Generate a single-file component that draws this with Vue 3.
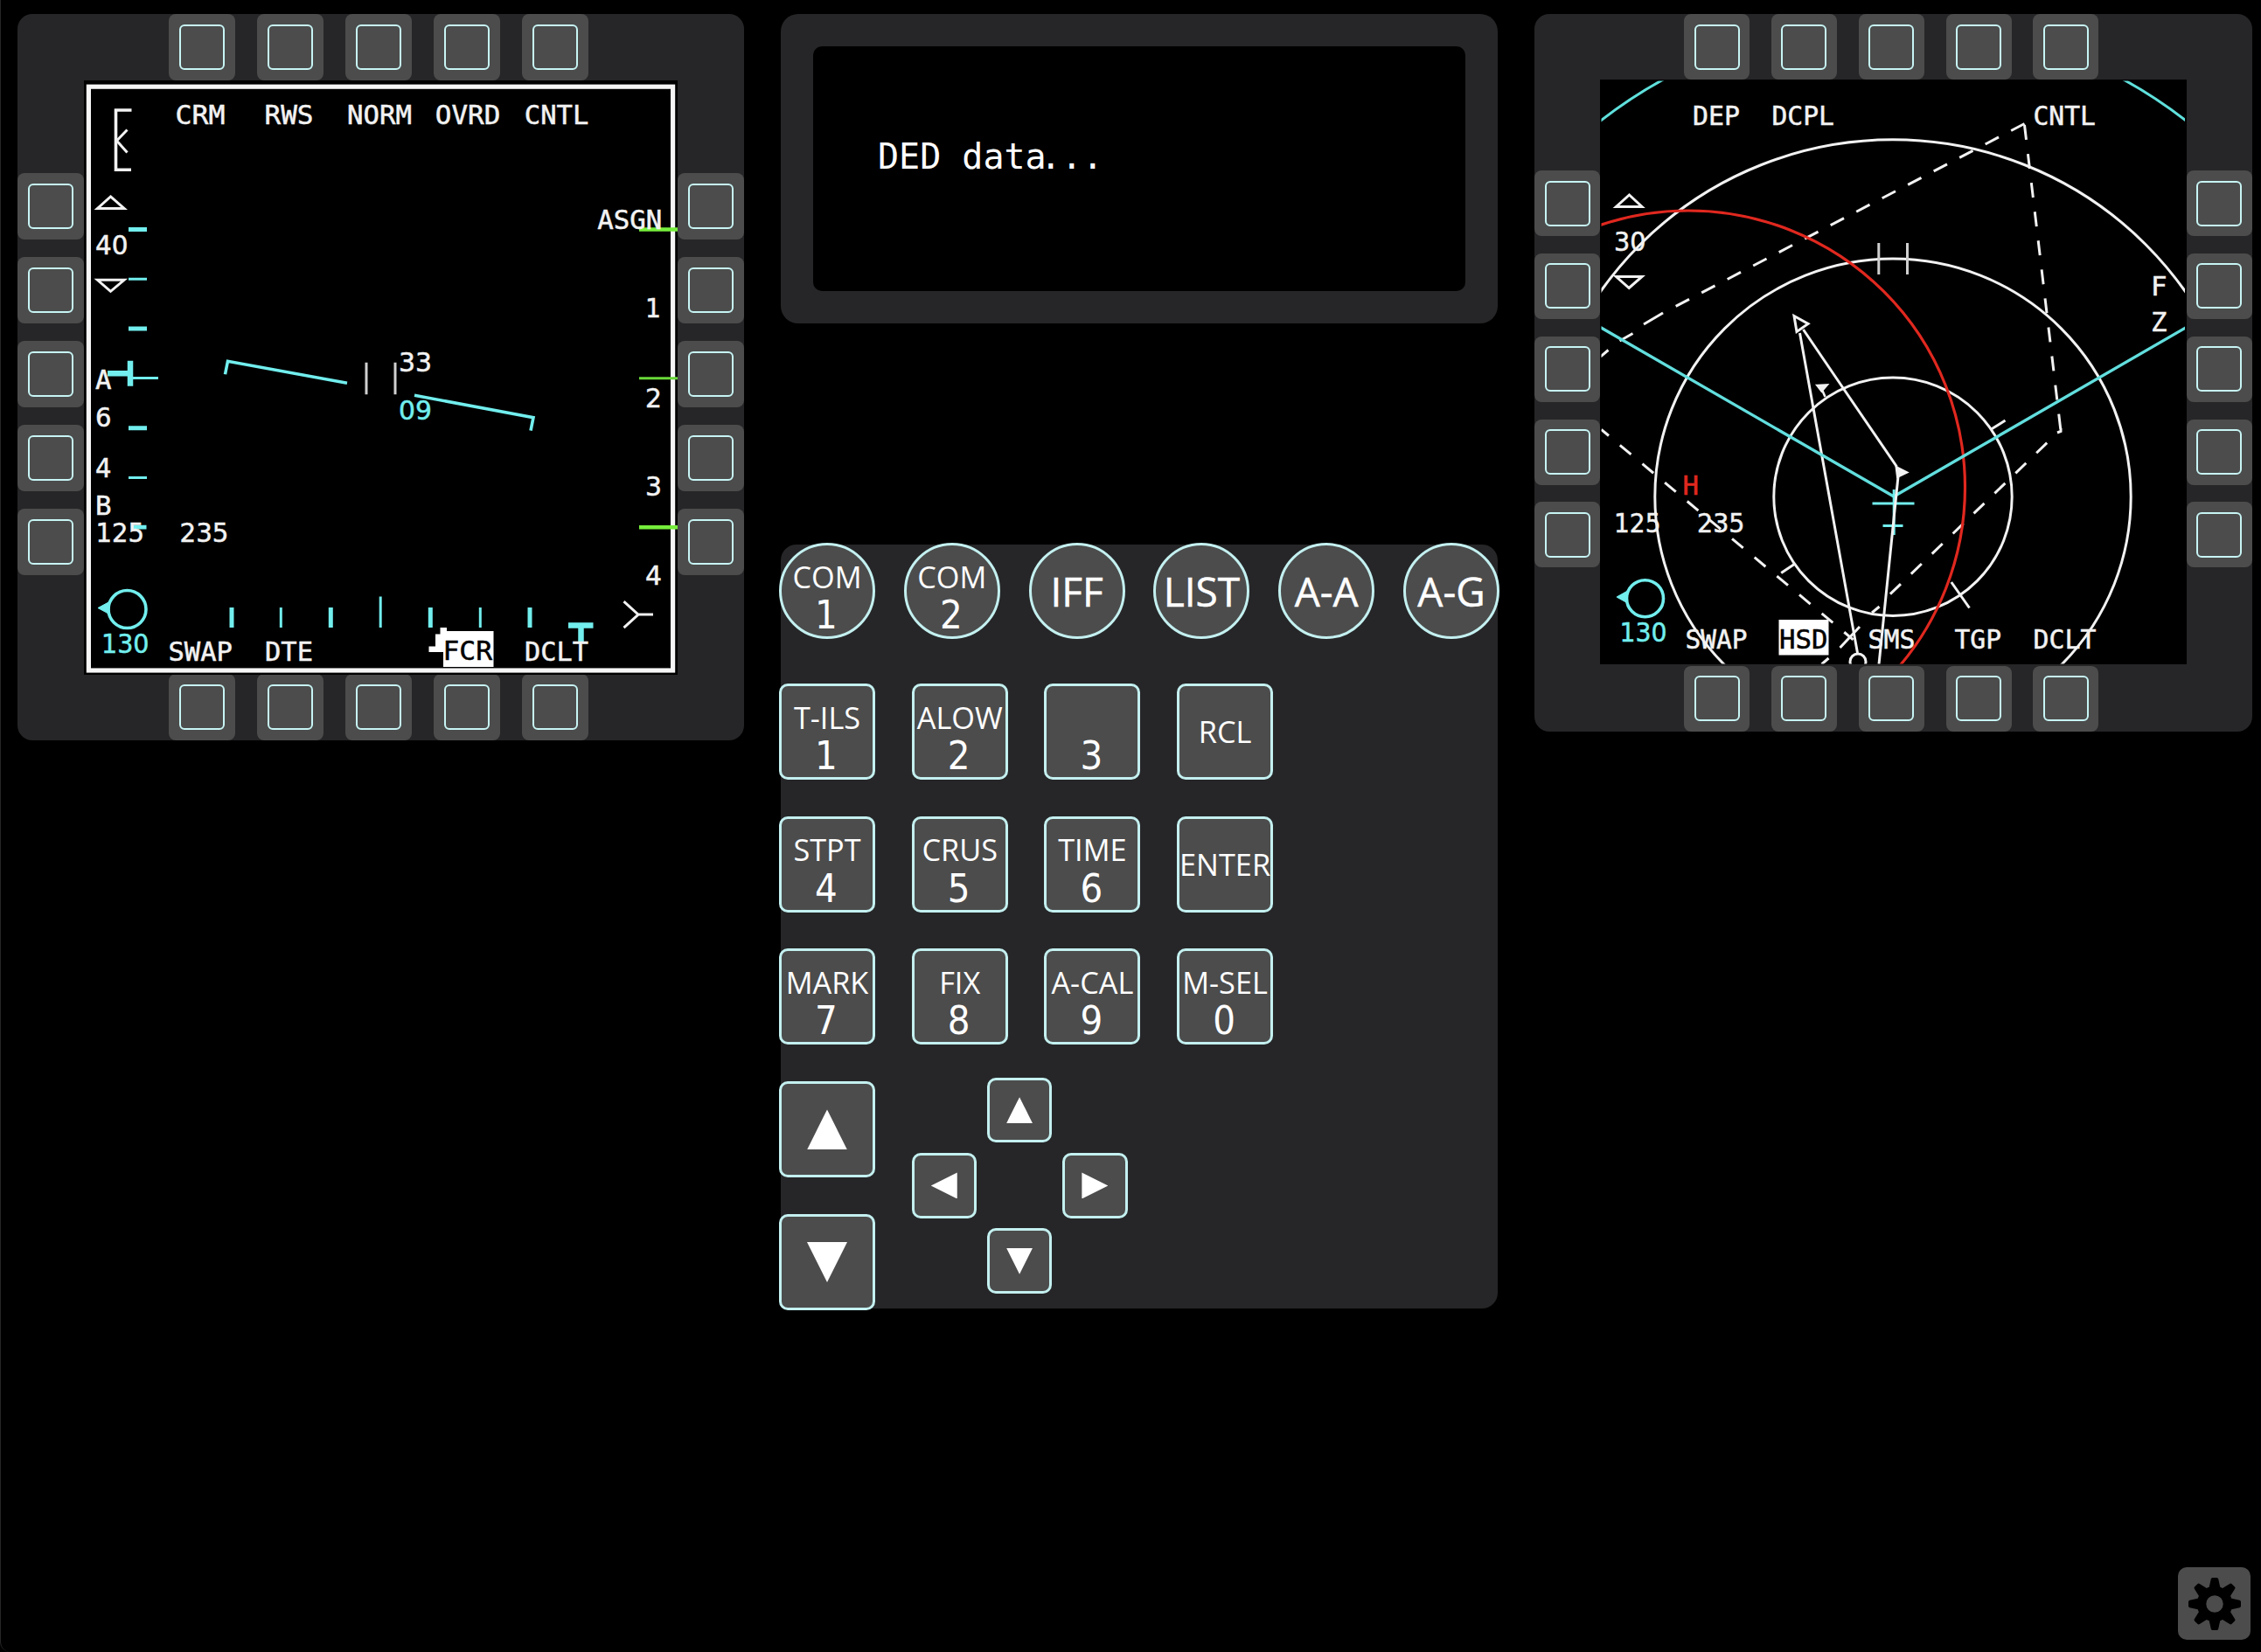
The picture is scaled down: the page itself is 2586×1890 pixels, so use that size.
<script setup>
const WHITE = '#f2f2f2'
const CYAN = '#72eeee'
const RED = '#e0281f'

// s: string, x: left ink edge, w: ink width, y: baseline
const fcrLabels = [
  { s: 'CRM', x: 202, w: 54, y: 142.5 },
  { s: 'RWS', x: 304, w: 53, y: 142.5 },
  { s: 'NORM', x: 398.5, w: 71, y: 142.5 },
  { s: 'OVRD', x: 499.3, w: 71.5, y: 142.5 },
  { s: 'CNTL', x: 601.3, w: 70.5, y: 142.5 },
  { s: 'ASGN', x: 684.7, w: 71, y: 262.5 },
  { s: '1', x: 739.5, w: 15, y: 363 },
  { s: '2', x: 739.5, w: 16, y: 466.5 },
  { s: '3', x: 739.5, w: 16, y: 567.5 },
  { s: '4', x: 739.5, w: 16, y: 669.5 },
  { s: '33', x: 457.5, w: 35, y: 425.5 },
  { s: '09', x: 457.5, w: 35, y: 480, c: CYAN },
  { s: '40', x: 110.5, w: 34.5, y: 291 },
  { s: 'A', x: 110.5, w: 15.5, y: 445 },
  { s: '6', x: 110.5, w: 15.5, y: 488 },
  { s: '4', x: 110.5, w: 15.5, y: 546.5 },
  { s: 'B', x: 110.5, w: 15.5, y: 589 },
  { s: '125', x: 111, w: 52.5, y: 620.5 },
  { s: '235', x: 207, w: 53, y: 620.5 },
  { s: '130', x: 117.5, w: 51.5, y: 747, c: CYAN },
  { s: 'SWAP', x: 194, w: 70.5, y: 756 },
  { s: 'DTE', x: 304.5, w: 52, y: 756 },
  { s: 'FCR', x: 508, w: 53.5, y: 755.5, c: '#000' },
  { s: 'DCLT', x: 601.5, w: 70, y: 756 },
]
const hsdLabels = [
  { s: 'DEP', x: 1938, w: 51, y: 142.5 },
  { s: 'DCPL', x: 2028.5, w: 68.5, y: 142.5 },
  { s: 'CNTL', x: 2327.5, w: 68.5, y: 142.5 },
  { s: 'F', x: 2462, w: 15.5, y: 338 },
  { s: 'Z', x: 2462, w: 15.5, y: 379 },
  { s: '30', x: 1848, w: 33.5, y: 286.5 },
  { s: 'H', x: 1926.5, w: 15.5, y: 566, c: RED },
  { s: '125', x: 1848, w: 50.5, y: 609 },
  { s: '235', x: 1943, w: 51.5, y: 609 },
  { s: '130', x: 1854.5, w: 51, y: 733.5, c: CYAN },
  { s: 'SWAP', x: 1929.5, w: 68, y: 742 },
  { s: 'HSD', x: 2037, w: 52.5, y: 742, c: '#000' },
  { s: 'SMS', x: 2138.5, w: 51, y: 742 },
  { s: 'TGP', x: 2237.5, w: 50.5, y: 742 },
  { s: 'DCLT', x: 2327.5, w: 69, y: 742 },
]
const isNumber = (s) => /^\d+$/.test(s)

const modeKeys = [
  { top: 'COM', main: '1' },
  { top: 'COM', main: '2' },
  { main: 'IFF' },
  { main: 'LIST' },
  { main: 'A-A' },
  { main: 'A-G' },
]
const keys = [
  { top: 'T-ILS', main: '1' },
  { top: 'ALOW', main: '2' },
  { top: '', main: '3' },
  { top: 'RCL' },
  { top: 'STPT', main: '4' },
  { top: 'CRUS', main: '5' },
  { top: 'TIME', main: '6' },
  { top: 'ENTER' },
  { top: 'MARK', main: '7' },
  { top: 'FIX', main: '8' },
  { top: 'A-CAL', main: '9' },
  { top: 'M-SEL', main: '0' },
]
const sides = ['top', 'left', 'right', 'bottom']
const teeth = [0, 45, 90, 135, 180, 225, 270, 315]
</script>

<template>
  <div class="cockpit">
    <main class="row">
      <section class="mfd mfd-left">
        <div v-for="side in sides" :key="side" class="osbs" :class="side">
          <button v-for="n in 5" :key="n" class="osb"><span class="cap"></span></button>
        </div>
        <svg class="screen" viewBox="96 92 679 680" preserveAspectRatio="none">
          <g fill="none" :stroke="WHITE" stroke-width="3">
            <rect x="101.4" y="99.2" width="668.2" height="668.3" stroke="#f6f6f6" stroke-width="5.2" />
            <path d="M132.500 124.500V196M131 126H150.500M131 194.300H150" stroke-width="3.600" />
            <path d="M145.500 148.500L133.500 161L145.500 174.500" />
            <path d="M126.500 225L142 238.500H111.500Z" />
            <path d="M111.500 320.500H142L126.500 333.500Z" />
            <path d="M419 415V451.500M452 415V451.500" stroke="#d0d0d0" />
            <path d="M713.500 688.500L730 703.500H747M730 703.500L713.500 718.500" />
          </g>
          <g fill="none" :stroke="CYAN" stroke-width="3">
            <path d="M147 319.300H168M147 546.800H168M152 432.800H181M321.300 695.500V718.500M549.300 695.500V718.500M435.200 683V718.500" />
            <path d="M147 262.700H168M147 376.300H168M147 490H168M150 603.500H167.500M265 695.500V718.500M378.300 695.500V718.500M492.300 695.500V718.500M606 695.500V718.500" stroke-width="5" />
            <path d="M149 413V442M123 427.500H149M650 716H678.500M664.500 716V736" stroke-width="6.500" />
            <path d="M257.500 428.500L260.500 413.500L397 438.500M474 452.500L610 478L607 493" stroke-width="3.600" />
            <circle cx="145.500" cy="697.500" r="21.500" stroke-width="3.600" />
            <path d="M112 696L125 689V703Z" :fill="CYAN" stroke-width="1" />
          </g>
          <path d="M731 262.700H775M731 603.700H775" stroke="#76ee3c" stroke-width="4.600" />
          <path d="M731 433H775" stroke="#68d838" stroke-width="3" />
          <path d="M503.500 718.500H511V722.500H564.500V763.500H507V746.500H490.500V740H498V726H503.500Z" fill="#fff" />
          <text
            v-for="(t, i) in fcrLabels" :key="i" class="ink" :class="{ num: isNumber(t.s) }"
            :x="t.x - 1.5" :y="t.y" :textLength="t.w + 3" lengthAdjust="spacingAndGlyphs" :fill="t.c || WHITE" :stroke="t.c || WHITE"
          >{{ t.s }}</text>
        </svg>
      </section>

      <section class="center">
        <div class="ded"><div class="ded-screen">DED data<span class="dots">...</span></div></div>

        <div class="icp">
          <div class="modes">
            <button v-for="(k, i) in modeKeys" :key="i" class="key round" :class="{ dual: k.top }">
              <span v-if="k.top" class="small">{{ k.top }}</span>
              <span class="big" :class="{ digit: isNumber(k.main) }">{{ k.main }}</span>
            </button>
          </div>
          <div class="pad">
            <button v-for="(k, i) in keys" :key="i" class="key" :class="{ dual: k.main }">
              <span class="small">{{ k.top }}</span>
              <span v-if="k.main" class="big digit">{{ k.main }}</span>
            </button>
          </div>
          <div class="nav">
            <div class="rocker">
              <button class="key"><i class="tri up"></i></button>
              <button class="key"><i class="tri down"></i></button>
            </div>
            <div class="dcs">
              <button class="key mini n"><i class="tri up"></i></button>
              <button class="key mini w"><i class="tri west"></i></button>
              <button class="key mini e"><i class="tri east"></i></button>
              <button class="key mini s"><i class="tri down"></i></button>
            </div>
          </div>
        </div>
      </section>

      <section class="mfd mfd-right">
        <div v-for="side in sides" :key="side" class="osbs" :class="side">
          <button v-for="n in 5" :key="n" class="osb"><span class="cap"></span></button>
        </div>
        <svg class="screen" viewBox="1830.5 91 670.5 669" preserveAspectRatio="none">
          <svg x="1832" y="92.500" width="667.500" height="667" viewBox="1832 92.500 667.500 667">
            <g fill="none" :stroke="WHITE" stroke-width="3">
              <circle cx="2165.500" cy="568.300" r="136.200" />
              <circle cx="2165.500" cy="568.300" r="272.200" />
              <circle cx="2165.500" cy="568.300" r="408.500" />
              <path d="M2149.300 278V314M2182 278V314" stroke="#cfcfcf" />
              <path d="M1864 223L1878.500 236.500H1849Z" />
              <path d="M1849 316.500H1878.500L1863.700 329.500Z" />
              <path d="M2037.700 655.500L2052.700 645.500M2278 491L2294 481M2232.300 666L2253 695.500" />
              <path d="M2079 441L2090 440.500L2084 447.500ZM2084.500 446L2088 454" :fill="WHITE" stroke-width="2.600" />
              <path d="M2316 141.500L1903 357.800" stroke-dasharray="17.300 16" />
              <path d="M1880.500 371L1902.500 358M1853 390L1868 381.500M1831 408L1840 400.500" />
              <path d="M2316 143L2357.500 493" stroke-dasharray="17 16.300" />
              <path d="M2357.500 490V493.500L2353.500 495" />
              <path d="M2341.700 506.700L2160 682" stroke-dasharray="16.700 16.500" />
              <path d="M2150 694L2141.500 701M2127.500 717L2105 741M2092 753L2084 760M1832 491.500L1840.500 498.500" />
              <path d="M1853.300 509.300L2120 731.800" stroke-dasharray="16.500 16.900" />
              <path d="M2052.500 361.500L2068.500 370.500L2055.500 379.500Z" />
              <path d="M2059 381L2117 703L2125 747M2063 377L2099 430L2170 534" />
              <circle cx="2125.500" cy="757" r="9" />
              <path d="M2169 534L2182 540.500L2170.500 546Z" :fill="WHITE" stroke-width="2" />
            </g>
            <circle cx="1931.500" cy="557.500" r="316.500" fill="none" :stroke="RED" stroke-width="3.200" />
            <g fill="none" :stroke="CYAN" stroke-width="3">
              <circle cx="2166" cy="568.300" r="545" stroke="#5fe0dc" />
              <path d="M1831 374.500L2166.500 568L2501 374.500" stroke="#62dede" stroke-width="3.400" />
              <path d="M2166.700 560V612M2142 576H2190M2154 601.500H2177" />
              <circle cx="1882" cy="684.700" r="21" stroke-width="3.600" />
              <path d="M1849.500 683L1862 676V690Z" :fill="CYAN" stroke-width="1" />
            </g>
            <path d="M2171.500 545L2149.500 760" fill="none" :stroke="WHITE" stroke-width="3" />
            <rect x="2035" y="709" width="57" height="40.500" fill="#fff" />
          </svg>
          <text
            v-for="(t, i) in hsdLabels" :key="i" class="ink" :class="{ num: isNumber(t.s) }"
            :x="t.x - 1.5" :y="t.y" :textLength="t.w + 3" lengthAdjust="spacingAndGlyphs" :fill="t.c || WHITE" :stroke="t.c || WHITE"
          >{{ t.s }}</text>
        </svg>
      </section>
    </main>

    <button class="settings">
      <svg width="62" height="62" viewBox="-31 -31 62 62">
        <circle r="15" fill="none" stroke="#000" stroke-width="10.500" />
        <path v-for="a in teeth" :key="a" :transform="`rotate(${a})`" d="M-7 -16L-4.200 -28.500Q-3.800 -30 -2.500 -30H2.500Q3.800 -30 4.200 -28.500L7 -16Z" />
      </svg>
    </button>
  </div>
</template>

<style>
body {
  background: #000;
}
</style>

<style scoped>
.cockpit {
  box-sizing: border-box;
  width: 2586px;
  height: 1890px;
  padding: 16px 12px 14px 19px;
  border-left: 1px solid #262626;
  border-bottom-left-radius: 12px;
  background: #000;
  display: flex;
  flex-direction: column;
  justify-content: space-between;
  align-items: flex-end;
  overflow: hidden;
}
.row {
  display: flex;
  align-items: flex-start;
  gap: 42px;
  width: 100%;
}
button {
  margin: 0;
  padding: 0;
  border: 0;
  color: #fff;
  font: inherit;
}

.mfd {
  flex: none;
  display: grid;
  background: #262628;
  border-radius: 17px;
  grid-template-areas: '. top .' 'left screen right' '. bottom .';
}
.mfd-left {
  --btn: 76px;
  --gap-x: 25px;
  --gap-y: 20px;
  grid-template-columns: 76px 679px 76px;
  grid-template-rows: 76px 679.500px 75px;
}
.mfd-right {
  --btn: 75px;
  --gap-x: 24.800px;
  --gap-y: 19.800px;
  grid-template-columns: 75px 670.500px 75px;
  grid-template-rows: 75px 670.500px 75px;
}
.screen {
  grid-area: screen;
  width: 100%;
  height: 100%;
  display: block;
  background: #000;
}
.mfd-right .screen {
  height: 669px;
}
.osbs {
  display: flex;
  justify-content: center;
  align-items: center;
}
.osbs.top { grid-area: top; gap: var(--gap-x); }
.osbs.bottom { grid-area: bottom; gap: var(--gap-x); }
.osbs.left { grid-area: left; flex-direction: column; gap: var(--gap-y); padding-bottom: 8px; }
.osbs.right { grid-area: right; flex-direction: column; gap: var(--gap-y); padding-bottom: 8px; }
.mfd-left .top, .mfd-left .bottom { padding-right: 5px; }
.mfd-right .top, .mfd-right .bottom { padding-right: 4px; }
.osb {
  flex: none;
  width: var(--btn);
  height: var(--btn);
  border-radius: 8px;
  background: #4c4c4c;
  display: flex;
  align-items: center;
  justify-content: center;
}
.cap {
  box-sizing: border-box;
  width: 52px;
  height: 52px;
  border: 2px solid #c8f5f5;
  border-radius: 6px;
}
.ink {
  font-family: 'DejaVu Sans Mono', monospace;
  font-size: 30px;
  stroke-width: 0.5px;
}
.ink.num {
  font-family: 'DejaVu Sans', sans-serif;
}

.center {
  flex: none;
  width: 820px;
  display: flex;
  flex-direction: column;
  gap: 253px;
}
.ded {
  box-sizing: border-box;
  height: 354px;
  padding: 37px;
  border-radius: 20px;
  background: #262628;
}
.ded-screen {
  box-sizing: border-box;
  height: 280px;
  padding: 103px 74px;
  border-radius: 10px;
  background: #000;
  color: #fff;
  font: 40px/47px 'DejaVu Sans Mono', monospace;
}
.dots {
  margin-left: -7px;
}
.icp {
  box-sizing: border-box;
  height: 874px;
  border-radius: 18px;
  background: #262628;
  font-family: 'Open Sans', 'Noto Sans', sans-serif;
}
.modes {
  display: flex;
  gap: 32.800px;
  margin: -2px 0 0 -2px;
}
.key {
  flex: none;
  box-sizing: border-box;
  width: 110px;
  height: 110px;
  border: 3px solid #c4f0f0;
  border-radius: 10px;
  background: #4c4c4c;
  display: flex;
  flex-direction: column;
  align-items: center;
  justify-content: center;
  white-space: nowrap;
}
.round {
  border-radius: 50%;
}
.dual {
  padding-top: 13px;
}
.small {
  height: 40px;
  font-size: 34.300px;
  line-height: 40px;
}
.big {
  font-size: 46px;
  line-height: 46px;
  -webkit-text-stroke: 0.5px #fff;
}
.digit {
  padding-top: 1.500px;
  margin: 0 2px -1.500px 0;
  font-family: 'DejaVu Sans Condensed', 'DejaVu Sans', sans-serif;
  font-stretch: condensed;
  font-size: 45px;
  -webkit-text-stroke: 0;
}
.pad {
  display: grid;
  grid-template-columns: repeat(4, 110px);
  gap: 41.700px;
  margin: 51px 0 0 -2px;
}
.nav {
  display: flex;
  gap: 41.500px;
  margin: 42px 0 0 -2px;
}
.rocker {
  display: flex;
  flex-direction: column;
  gap: 41.700px;
}
.dcs {
  margin-top: -4.500px;
  display: grid;
  grid-template-columns: repeat(3, 74.500px);
  grid-template-rows: repeat(3, 74.500px);
  gap: 11.800px;
}
.mini {
  width: 74.500px;
  height: 74.500px;
}
.n { grid-area: 1 / 2; }
.w { grid-area: 2 / 1; }
.e { grid-area: 2 / 3; }
.s { grid-area: 3 / 2; }
.tri {
  width: 46px;
  height: 46px;
  background: #fff;
}
.mini .tri {
  width: 30px;
  height: 30px;
}
.up { clip-path: polygon(50% 0, 100% 100%, 0 100%); }
.down { clip-path: polygon(0 0, 100% 0, 50% 100%); }
.west { clip-path: polygon(0 50%, 100% 0, 100% 100%); }
.east { clip-path: polygon(0 0, 100% 50%, 0 100%); }

.settings {
  width: 83px;
  height: 83px;
  border-radius: 10px;
  background: #4c4c4c;
  display: flex;
  align-items: center;
  justify-content: center;
}
</style>
